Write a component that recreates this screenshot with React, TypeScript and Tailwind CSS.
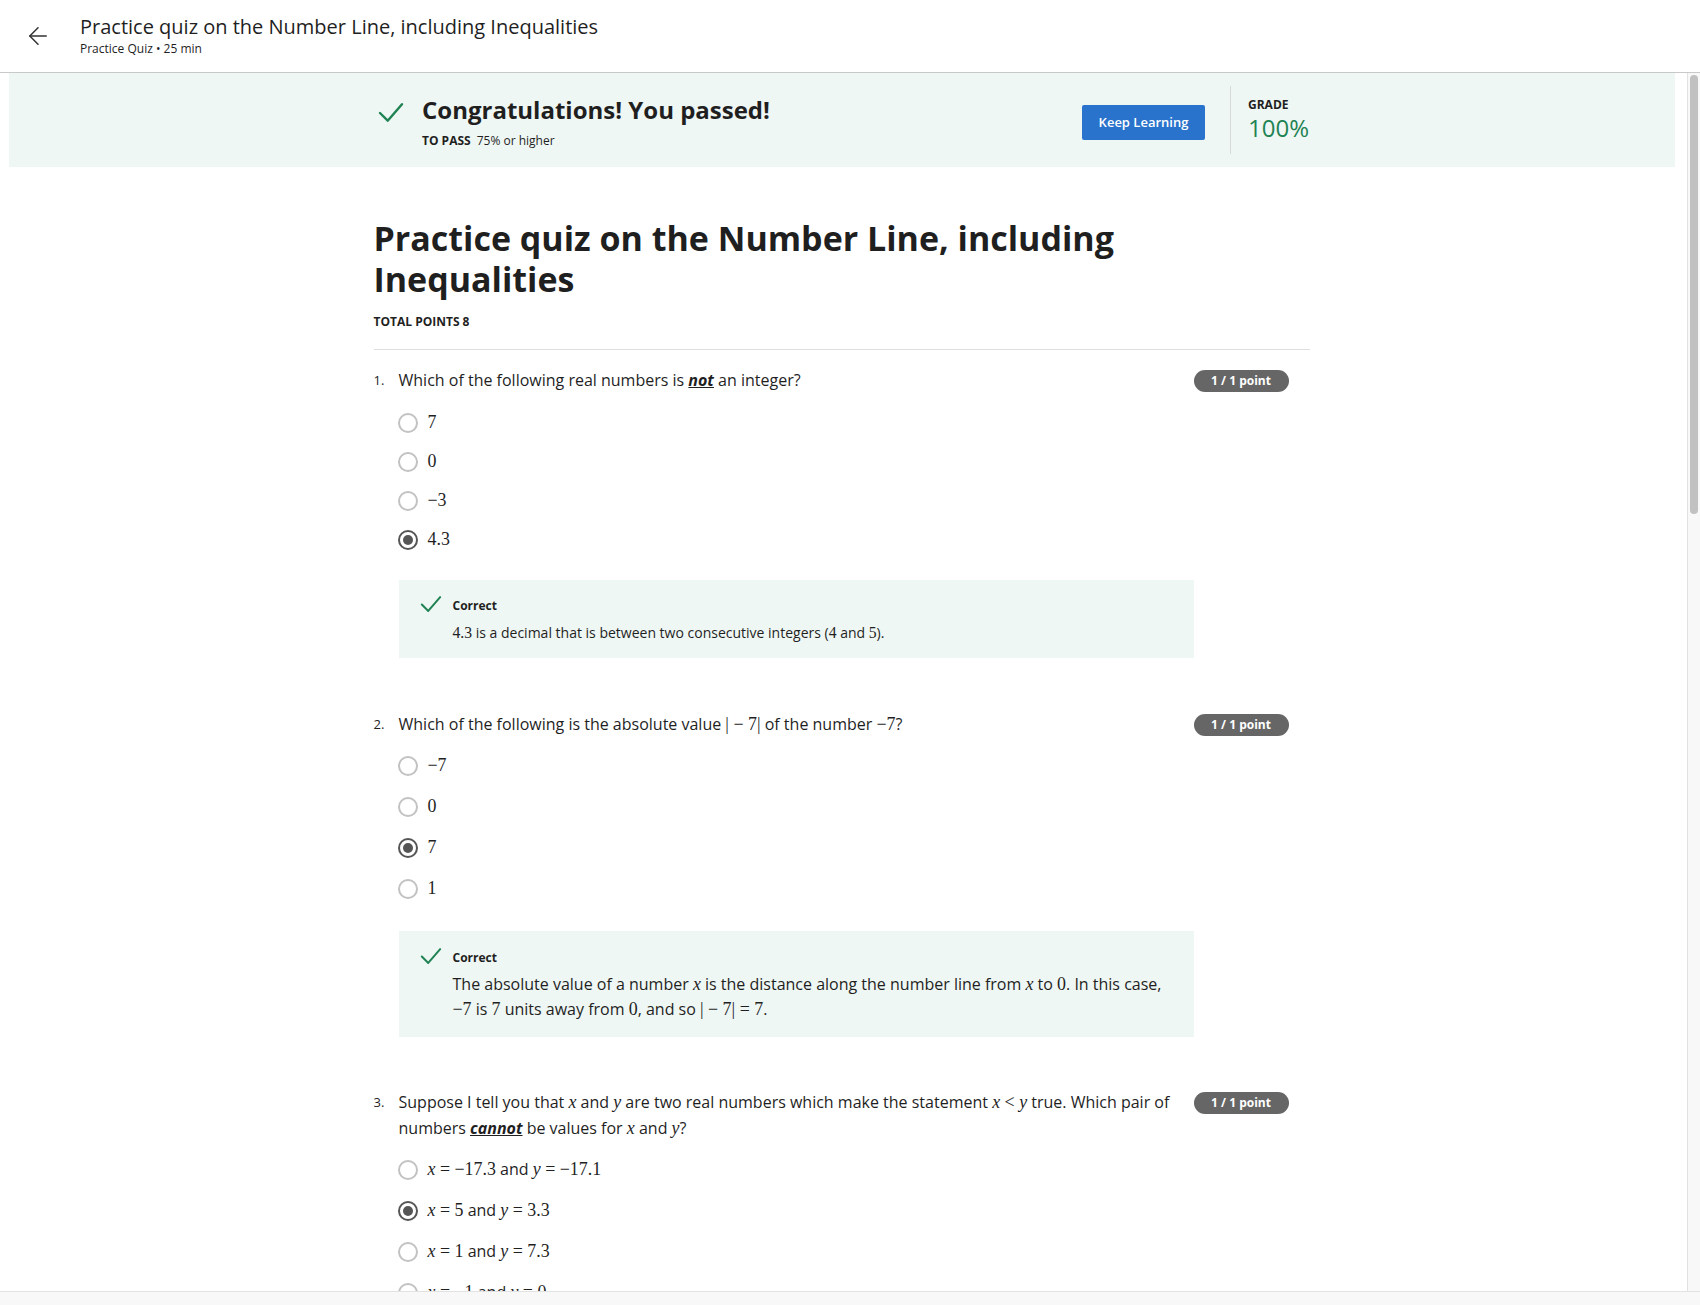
import { ArrowLeft } from 'lucide-react';
import type { ReactNode } from 'react';

const sans = { fontFamily: '"Open Sans", "Noto Sans", sans-serif' };

function M({ children, i }: { children: ReactNode; i?: boolean }) {
  return (
    <span
      className={i ? 'italic' : ''}
      style={{ fontFamily: '"Liberation Serif", "DejaVu Serif", serif', fontSize: '1.12em' }}
    >
      {children}
    </span>
  );
}

function Check({ className }: { className: string }) {
  return (
    <svg viewBox="0 0 24 20" className={className} fill="none">
      <polyline points="2,10 9,17 22,2" stroke="#1f8354" strokeWidth="2.2" strokeLinecap="round" strokeLinejoin="round" />
    </svg>
  );
}

function Radio({ checked }: { checked?: boolean }) {
  return (
    <span
      className={
        'flex h-5 w-5 shrink-0 items-center justify-center rounded-full border-2 bg-white ' +
        (checked ? 'border-[#555555]' : 'border-[#c2c2c2]')
      }
    >
      {checked && <span className="h-[10px] w-[10px] rounded-full bg-[#555555]" />}
    </span>
  );
}

function Badge() {
  return (
    <span className="ml-1 mr-[21px] mt-[3px] flex h-[22px] w-[95px] shrink-0 items-center justify-center rounded-full bg-[#666666] text-[12px] font-bold text-white">
      1 / 1 point
    </span>
  );
}

function Question({ n, children }: { n: number; children: ReactNode }) {
  return (
    <div className="flex items-start">
      <span className="w-[25px] shrink-0 pt-[3px] text-[13px] leading-5 text-[#1f1f1f]">{n}.</span>
      <div className="flex-1 text-[16px] leading-[26px] text-[#1f1f1f]">{children}</div>
      <Badge />
    </div>
  );
}

function Options({ items, rowClass, top }: { items: { label: ReactNode; checked?: boolean }[]; rowClass: string; top: string }) {
  return (
    <div className={'ml-[24px] ' + top}>
      {items.map((o, k) => (
        <div key={k} className={'flex items-center gap-[10px] text-[16px] text-[#1f1f1f] ' + rowClass}>
          <Radio checked={o.checked} />
          <span>{o.label}</span>
        </div>
      ))}
    </div>
  );
}

function Feedback({ children, textClass, box }: { children: ReactNode; textClass: string; box: string }) {
  return (
    <div className={'ml-[25px] mr-[116px] flex bg-[#eff7f4] pl-[21px] pr-4 ' + box}>
      <Check className="mt-[-3px] h-[19px] w-[22px] shrink-0" />
      <div className="ml-[11px] flex-1">
        <div className="text-[12px] font-bold leading-4 text-[#1f1f1f]">Correct</div>
        <div className={'text-[#1f1f1f] ' + textClass}>{children}</div>
      </div>
    </div>
  );
}

export default function App() {
  return (
    <div className="flex h-screen flex-col overflow-hidden bg-white" style={sans}>
      <header className="flex h-[73px] shrink-0 items-center border-b border-[#c9c9c9] bg-white">
        <ArrowLeft className="ml-[24px] h-[28px] w-[28px] text-[#333333]" strokeWidth={1.3} />
        <div className="ml-[28px] -mt-[3px]">
          <div className="text-[20px] leading-[28px] text-[#1f1f1f]">
            Practice quiz on the Number Line, including Inequalities
          </div>
          <div className="text-[12px] leading-4 text-[#1f1f1f]">Practice Quiz • 25 min</div>
        </div>
      </header>

      <div className="flex min-h-0 flex-1 flex-col">
        <div className="flex min-h-0 flex-1">
          <main className="min-w-0 flex-1 overflow-hidden">
            <section className="ml-[9px] mr-[12px] flex h-[94px] items-center bg-[#eff7f4]">
              <div className="mx-auto flex w-[936px] items-center">
                <Check className="ml-[3px] h-[22px] w-[28px] -mt-[14px] shrink-0" />
                <div className="ml-[17px] mt-[3px]">
                  <div className="text-[24px] font-bold leading-8 text-[#1f1f1f]">Congratulations! You passed!</div>
                  <div className="mt-[7px] text-[12px] leading-4 text-[#1f1f1f]">
                    <span className="font-bold">TO PASS</span>
                    <span className="ml-[6px]">75% or higher</span>
                  </div>
                </div>
                <button className="ml-auto mt-[5px] h-[35px] w-[123px] rounded-[2px] bg-[#2a73cc] text-[13px] font-semibold text-white">
                  Keep Learning
                </button>
                <div className="ml-[25px] h-[68px] w-px bg-[#d9d9d9]" />
                <div className="ml-[17px] w-[62px]">
                  <div className="text-[12px] font-bold leading-4 text-[#1f1f1f]">GRADE</div>
                  <div className="text-[24px] leading-[30px] text-[#1f8354]">100%</div>
                </div>
              </div>
            </section>

            <div className="pr-[4px]">
              <div className="mx-auto w-[936px] pb-10">
                <h1 className="mt-[51px] text-[34px] font-bold leading-[41px] text-[#1f1f1f]">
                  Practice quiz on the Number Line, including Inequalities
                </h1>
                <div className="mt-[14px] text-[12px] font-bold leading-4 text-[#1f1f1f]">TOTAL POINTS 8</div>
                <div className="mt-[19px] h-px bg-[#dedede]" />

                <div className="mt-[17px]">
                  <Question n={1}>
                    Which of the following real numbers is{' '}
                    <span className="font-bold italic underline">not</span> an integer?
                  </Question>
                  <Options
                    top="mt-[10px]"
                    rowClass="h-[39px]"
                    items={[
                      { label: <M>7</M> },
                      { label: <M>0</M> },
                      { label: <M>−3</M> },
                      { label: <M>4.3</M>, checked: true },
                    ]}
                  />
                  <Feedback box="mt-[21px] pt-[18px] pb-[15px]" textClass="mt-[9px] text-[14px] leading-5">
                    <M>4.3</M> is a decimal that is between two consecutive integers (<M>4</M> and <M>5</M>).
                  </Feedback>
                </div>

                <div className="mt-[53px]">
                  <Question n={2}>
                    Which of the following is the absolute value <M>| − 7|</M> of the number <M>−7</M>?
                  </Question>
                  <Options
                    top="mt-[8px]"
                    rowClass="h-[41px]"
                    items={[
                      { label: <M>−7</M> },
                      { label: <M>0</M> },
                      { label: <M>7</M>, checked: true },
                      { label: <M>1</M> },
                    ]}
                  />
                  <Feedback box="mt-[22px] pt-[19px] pb-[15px]" textClass="mt-[6px] text-[16px] leading-[25px]">
                    The absolute value of a number <M i>x</M> is the distance along the number line from <M i>x</M> to{' '}
                    <M>0</M>. In this case, <M>−7</M> is <M>7</M> units away from <M>0</M>, and so <M>| − 7| = 7</M>.
                  </Feedback>
                </div>

                <div className="mt-[52px]">
                  <Question n={3}>
                    Suppose I tell you that <M i>x</M> and <M i>y</M> are two real numbers which make the statement{' '}
                    <M>
                      <i>x</i> &lt; <i>y</i>
                    </M>{' '}
                    true. Which pair of numbers <span className="font-bold italic underline">cannot</span> be values for{' '}
                    <M i>x</M> and <M i>y</M>?
                  </Question>
                  <Options
                    top="mt-[8px]"
                    rowClass="h-[41px]"
                    items={[
                      { label: <><M><i>x</i> = −17.3</M> and <M><i>y</i> = −17.1</M></> },
                      { label: <><M><i>x</i> = 5</M> and <M><i>y</i> = 3.3</M></>, checked: true },
                      { label: <><M><i>x</i> = 1</M> and <M><i>y</i> = 7.3</M></> },
                      { label: <><M><i>x</i> = −1</M> and <M><i>y</i> = 0</M></> },
                    ]}
                  />
                </div>
              </div>
            </div>
          </main>

          {/* vertical scrollbar */}
          <div className="w-[13px] shrink-0 border-l border-[#e2e2e2] bg-[#f8f8f8] pt-[2px]">
            <div className="ml-[2px] h-[439px] w-[8px] rounded-full bg-[#c1c1c1]" />
          </div>
        </div>

        {/* horizontal scrollbar track */}
        <div className="h-[14px] shrink-0 border-t border-[#e2e2e2] bg-[#f8f8f8]" />
      </div>
    </div>
  );
}
